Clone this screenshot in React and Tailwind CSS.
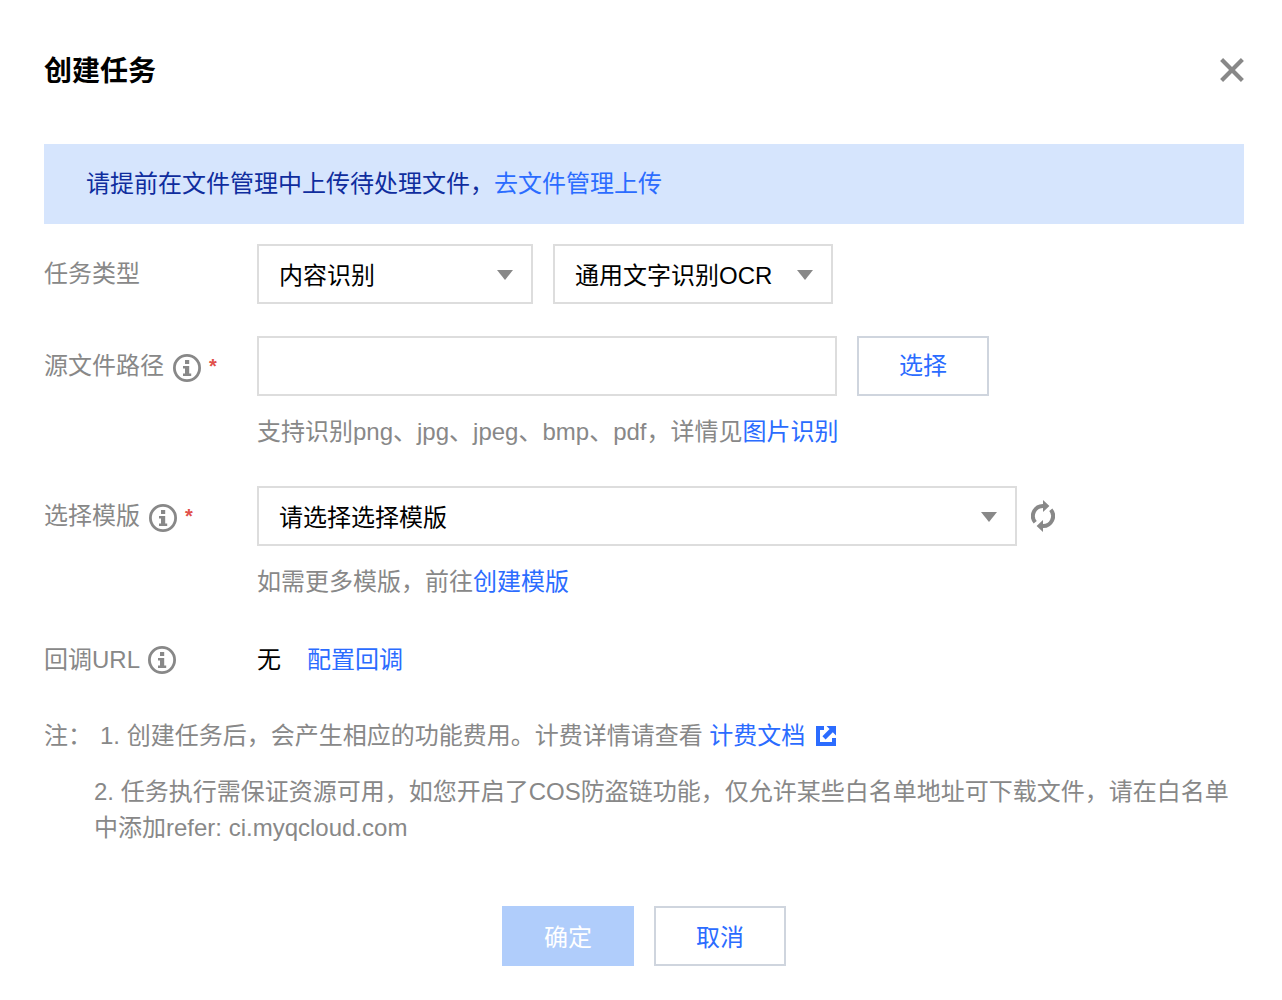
function InfoIcon() {
  return (
    <svg className="size-7 shrink-0" viewBox="0 0 28 28" aria-hidden="true">
      <circle cx="14" cy="14" r="12.6" fill="none" stroke="#888" strokeWidth="2.8" />
      <path d="M12 6h4.2v4H12zM10 12h6.2v7.6h2V22H10v-2.4h2v-5.2h-2z" fill="#888" />
    </svg>
  );
}

function CloseIcon() {
  return (
    <svg className="size-6" viewBox="0 0 24 24" aria-hidden="true">
      <path d="M1.6 1.6l20.8 20.8M22.4 1.6L1.6 22.4" fill="none" stroke="#888" strokeWidth="4.2" />
    </svg>
  );
}

function RefreshIcon() {
  return (
    <svg className="h-8 w-6" viewBox="0 0 24 32" aria-hidden="true">
      <g fill="none" stroke="#888" strokeWidth="4">
        <path d="M4.2 22.3A10 10 0 0 1 12.5 6" />
        <path d="M19.8 9.7A10 10 0 0 1 11.5 26" />
      </g>
      <path d="M12 0l6.4 6-6.4 6zM12 32l-6.4-6 6.4-6z" fill="#888" />
    </svg>
  );
}

function ExternalIcon() {
  return (
    <svg className="size-5" viewBox="0 0 20 20" aria-hidden="true">
      <path d="M0 0h8v4H4v12h12v-4h4v8H0z" fill="#2b6cff" />
      <path d="M10.5 0H20v9.5l-3.2-3.2-7.2 7.2-3.2-3.2 7.2-7.2z" fill="#2b6cff" />
    </svg>
  );
}

function Select({ label, id, option, className }) {
  return (
    <div className={`relative ${className}`}>
      <select
        id={id}
        aria-label={label}
        className="block h-15 w-full appearance-none border-2 border-[#ddd] bg-white pr-12 pl-5 pt-1 text-black outline-none"
      >
        <option>{option}</option>
      </select>
      <svg
        className="pointer-events-none absolute top-[26px] right-5 h-[10px] w-4"
        viewBox="0 0 16 10"
        aria-hidden="true"
      >
        <path d="M0 0h16L8 10z" fill="#888" />
      </svg>
    </div>
  );
}

function Label({ htmlFor, text, info, required }) {
  return (
    <div className="flex h-15 w-[213px] shrink-0 items-center text-[#888]">
      <label htmlFor={htmlFor}>{text}</label>
      {info && (
        <span className={required ? "mt-1 ml-[9px]" : "ml-2"}>
          <InfoIcon />
        </span>
      )}
      {required && <span className="ml-2 text-xl font-bold text-[#e1504a]">*</span>}
    </div>
  );
}

function Link({ children }) {
  return (
    <a href="#" className="text-[#2b6cff]">
      {children}
    </a>
  );
}

export default function App() {
  return (
    <main
      role="dialog"
      aria-labelledby="title"
      className="bg-white pt-12 pr-[38px] pb-8 pl-11 font-['Liberation_Sans','Noto_Sans_CJK_SC',sans-serif] text-2xl leading-9 text-black"
    >
      <header className="flex h-11 items-center justify-between">
        <h1 id="title" className="pt-1 text-[28px] font-bold">创建任务</h1>
        <button type="button" aria-label="关闭">
          <CloseIcon />
        </button>
      </header>

      <p className="mt-13 flex h-20 items-center bg-[#d6e5fd] px-[42px] text-[#0f2d9e]">
        <span>请提前在文件管理中上传待处理文件，</span>
        <Link>去文件管理上传</Link>
      </p>

      <form className="mt-5">
        <div className="flex">
          <Label htmlFor="type" text="任务类型" />
          <div className="flex gap-5">
            <Select id="type" label="任务类型" option="内容识别" className="w-[276px]" />
            <Select id="subtype" label="识别类型" option="通用文字识别OCR" className="w-[280px]" />
          </div>
        </div>

        <div className="mt-8 flex">
          <Label htmlFor="path" text="源文件路径" info required />
          <div>
            <div className="flex gap-5">
              <input id="path" type="text" className="h-15 w-[580px] border-2 border-[#ddd] px-5 outline-none" />
              <button type="button" className="h-15 w-[132px] border-2 border-[#cfd5de] text-[#2b6cff]">
                选择
              </button>
            </div>
            <p className="mt-[18px] text-[#888]">
              支持识别png、jpg、jpeg、bmp、pdf，详情见<Link>图片识别</Link>
            </p>
          </div>
        </div>

        <div className="mt-9 flex">
          <Label htmlFor="template" text="选择模版" info required />
          <div>
            <div className="flex items-center gap-[14px]">
              <Select id="template" label="选择模版" option="请选择选择模版" className="w-[760px]" />
              <button type="button" aria-label="刷新">
                <RefreshIcon />
              </button>
            </div>
            <p className="mt-[18px] text-[#888]">
              如需更多模版，前往<Link>创建模版</Link>
            </p>
          </div>
        </div>

        <div className="mt-[30px] flex items-center">
          <Label text="回调URL" info />
          <div className="flex gap-[26px]">
            <span>无</span>
            <Link>配置回调</Link>
          </div>
        </div>

        <div className="mt-7 text-[#888]">
          <p className="flex items-center">
            <span className="w-14 shrink-0">注：</span>
            <span>
              1. 创建任务后，会产生相应的功能费用。计费详情请查看 <Link>计费文档</Link>
            </span>
            <a href="#" aria-label="计费文档" className="ml-[11px]">
              <ExternalIcon />
            </a>
          </p>
          <p className="mt-5 pl-[50px]">
            2. 任务执行需保证资源可用，如您开启了COS防盗链功能，仅允许某些白名单地址可下载文件，请在白名单中添加refer: ci.myqcloud.com
          </p>
        </div>

        <div className="mt-15 flex justify-center gap-5">
          <button type="submit" disabled className="h-15 w-[132px] bg-[#b0cdfb] pt-1 text-white">
            确定
          </button>
          <button type="button" className="h-15 w-[132px] border-2 border-[#cfd5de] pt-1 text-[#2b6cff]">
            取消
          </button>
        </div>
      </form>
    </main>
  );
}
